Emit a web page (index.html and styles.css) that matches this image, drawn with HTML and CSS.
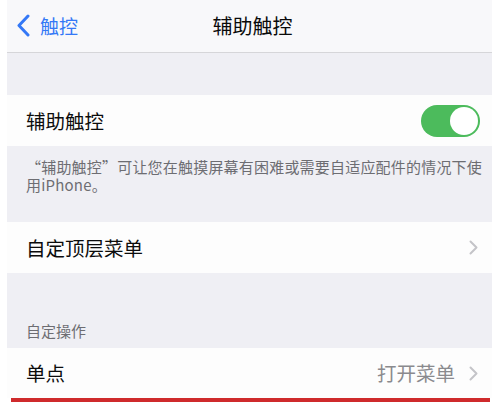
FILE: index.html
```html
<!DOCTYPE html>
<html lang="zh-CN">
<head>
<meta charset="utf-8">
<link rel="stylesheet" href="styles.css">
</head>
<body>
<div class="screen">
  <header class="nav">
    <div class="back">
      <svg class="back-icon" width="14" height="23" viewBox="0 0 14 23"><polyline points="12,2 3,11.5 12,21" fill="none" stroke="#3478f6" stroke-width="3" stroke-linecap="round" stroke-linejoin="round"/></svg>
      <span class="back-text">触控</span>
    </div>
    <div class="title">辅助触控</div>
    <div></div>
  </header>
  <div class="gap gap-top"></div>
  <div class="row row-toggle">
    <span class="label">辅助触控</span>
    <span class="toggle"><span class="knob"></span></span>
  </div>
  <div class="footer">“辅助触控”可让您在触摸屏幕有困难或需要自适应配件的情况下使用iPhone。</div>
  <div class="row">
    <span class="label">自定顶层菜单</span>
    <svg class="chev" width="9" height="15" viewBox="0 0 9 15"><polyline points="1.5,1.5 7.5,7.5 1.5,13.5" fill="none" stroke="#c4c4c8" stroke-width="2" stroke-linecap="round" stroke-linejoin="round"/></svg>
  </div>
  <div class="section-head">自定操作</div>
  <div class="row row-last">
    <span class="label">单点</span>
    <span class="value">打开菜单</span>
    <svg class="chev" width="9" height="15" viewBox="0 0 9 15"><polyline points="1.5,1.5 7.5,7.5 1.5,13.5" fill="none" stroke="#c4c4c8" stroke-width="2" stroke-linecap="round" stroke-linejoin="round"/></svg>
  </div>
  <div class="redline"></div>
</div>
</body>
</html>
```
FILE: styles.css
```css
html, body {
  margin: 0;
  padding: 0;
  background: #ffffff;
}
body {
  font-family: "Noto Sans CJK SC", "Noto Sans", sans-serif;
  color: #111;
}
.screen {
  margin-left: 7px;
  width: 485px;
  height: 402px;
  display: flex;
  flex-direction: column;
  overflow: hidden;
}
.nav {
  height: 53px;
  box-sizing: border-box;
  background: #f8f8fa;
  border-bottom: 1px solid #d6d6d9;
  display: grid;
  grid-template-columns: 1fr auto 1fr;
  align-items: center;
}
.back {
  display: flex;
  align-items: center;
  padding-left: 9px;
  gap: 10px;
  margin-top: -1px;
}
.back-icon { display: block; }
.back-text {
  color: #3478f6;
  font-size: 19px;
  line-height: 24px;
}
.title {
  font-size: 20px;
  line-height: 24px;
  margin-left: 6px;
  margin-top: -1px;
  color: #0a0a0a;
}
.gap {
  background: #efeff4;
}
.gap-top {
  height: 42px;
}
.row {
  background: #fdfdfd;
  height: 51px;
  display: flex;
  align-items: center;
  padding: 0 14px 0 19px;
}
.row-toggle {
  padding-right: 12px;
}
.row-last {
  height: 50px;
}
.label {
  font-size: 19.5px;
  line-height: 24px;
  flex: 1;
  color: #0c0c0c;
}
.value {
  font-size: 19.5px;
  line-height: 24px;
  color: #8a8a8e;
  margin-right: 14px;
}
.chev { display: block; }
.toggle {
  width: 59px;
  height: 32px;
  border-radius: 16px;
  background: #4cbb5c;
  position: relative;
  display: block;
}
.knob {
  position: absolute;
  right: 2px;
  top: 2px;
  width: 28px;
  height: 28px;
  border-radius: 50%;
  background: #ffffff;
}
.footer {
  background: #efeff4;
  height: 76px;
  box-sizing: border-box;
  padding: 12px 10px 0 19px;
  font-size: 15px;
  line-height: 18px;
  letter-spacing: 0.2px;
  color: #6d6d72;
}
.section-head {
  background: #efeff4;
  height: 75px;
  box-sizing: border-box;
  display: flex;
  align-items: flex-end;
  padding: 0 0 7px 19px;
  font-size: 15px;
  line-height: 20px;
  color: #6d6d72;
}
.redline {
  height: 4px;
  margin: 0 2px 0 4px;
  background: #cf2a2c;
}
```
